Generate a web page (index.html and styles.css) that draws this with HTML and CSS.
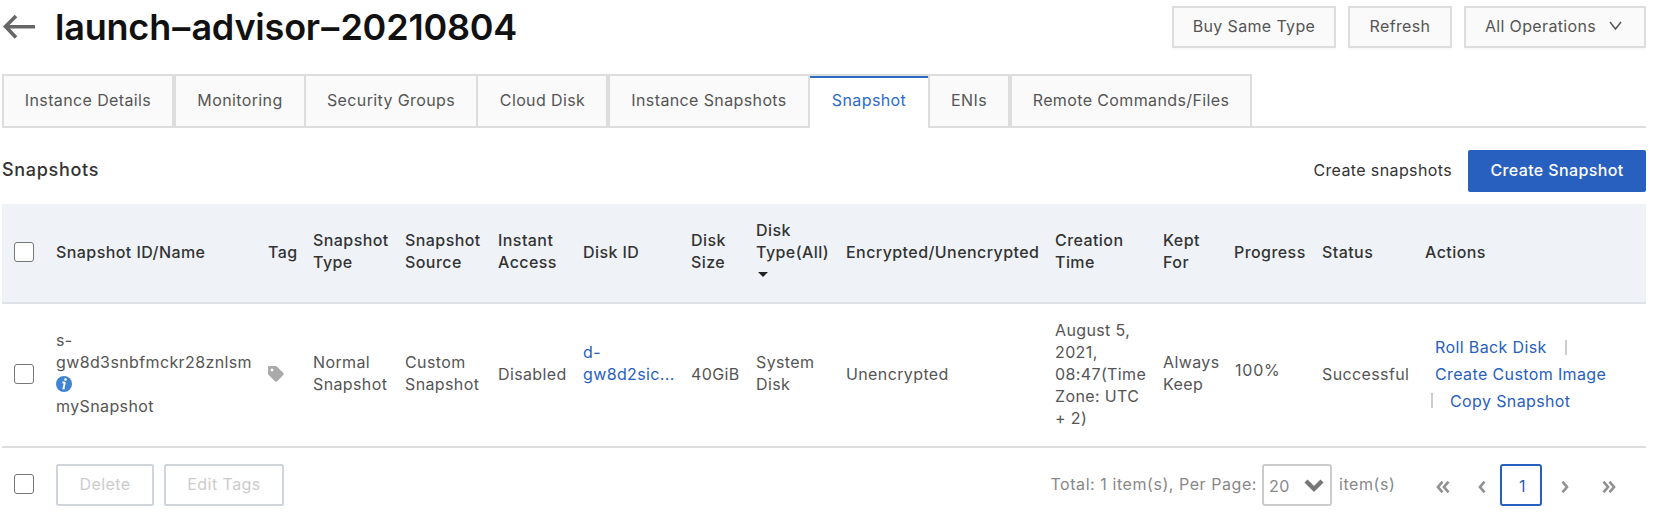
FILE: index.html
```html
<!DOCTYPE html>
<html lang="en">
<head>
<meta charset="utf-8">
<title>launch-advisor-20210804</title>
<link rel="stylesheet" href="styles.css">
</head>
<body>
<header class="header">
  <svg class="back" width="34" height="26" viewBox="0 0 34 26"><path d="M14 2 3.500 12.500 14 23.500M3.500 12.800h29.500" fill="none" stroke="#666" stroke-width="3.600"/></svg>
  <h1 class="title">launch<span class="dash">–</span>advisor<span class="dash">–</span>20210804</h1>
  <div class="header-actions">
    <button class="btn buy">Buy Same Type</button>
    <button class="btn refresh">Refresh</button>
    <button class="btn operations">All Operations<svg width="14" height="10" viewBox="0 0 14 10"><path d="M1 1l5.500 7L12 1" fill="none" stroke="#555" stroke-width="1.400"/></svg></button>
  </div>
</header>
<nav class="tabs">
  <a class="tab t-details">Instance Details</a>
  <a class="tab t-monitoring">Monitoring</a>
  <a class="tab t-security joined">Security Groups</a>
  <a class="tab t-disk joined">Cloud Disk</a>
  <a class="tab t-snapshots">Instance Snapshots</a>
  <a class="tab t-snapshot active">Snapshot</a>
  <a class="tab t-enis">ENIs</a>
  <a class="tab t-remote">Remote Commands/Files</a>
  <span class="tabs-rest"></span>
</nav>
<section class="toolbar">
  <h2 class="subtitle">Snapshots</h2>
  <span class="hint">Create snapshots</span>
  <button class="primary">Create Snapshot</button>
</section>
<table class="grid">
  <colgroup><col class="c1"><col class="c2"><col class="c3"><col class="c4"><col class="c5"><col class="c6"><col class="c7"><col class="c8"><col class="c9"><col class="c10"><col class="c11"><col class="c12"><col class="c13"><col class="c14"><col class="c15"></colgroup>
  <thead>
    <tr>
      <th><span class="check"></span></th>
      <th>Snapshot ID/Name</th>
      <th>Tag</th>
      <th class="even">Snapshot<br>Type</th>
      <th class="even">Snapshot<br>Source</th>
      <th class="even">Instant<br>Access</th>
      <th>Disk ID</th>
      <th class="even">Disk<br>Size</th>
      <th>Disk<br>Type(All)<br><span class="caret"></span></th>
      <th>Encrypted/Unencrypted</th>
      <th class="even">Creation<br>Time</th>
      <th class="even">Kept<br>For</th>
      <th>Progress</th>
      <th>Status</th>
      <th>Actions</th>
    </tr>
  </thead>
  <tbody>
    <tr>
      <td><span class="check"></span></td>
      <td class="even">s-<br>gw8d3snbfmckr28znlsm<br><svg class="info" width="16" height="16" viewBox="0 0 16 16"><circle cx="8" cy="8" r="8" fill="#4083d3"/><path d="M9 6 7.500 12.200M6.400 6.500h2.200M6.500 12.300h2.200" stroke="#fff" stroke-width="1.800" fill="none"/><circle cx="9.500" cy="3.500" r="1.300" fill="#fff"/></svg><br>mySnapshot</td>
      <td><svg class="tag" width="16" height="16" viewBox="0 0 16 16"><path fill="#aaa" fill-rule="evenodd" d="M1 0h7.300l7 7.100q.7.900 0 1.800L9 15.400q-.9.700-1.800 0L0 8.200V1q0-1 1-1zM4 2.600a1.400 1.400 0 1 0 .01 0z"/></svg></td>
      <td class="even">Normal<br>Snapshot</td>
      <td class="even">Custom<br>Snapshot</td>
      <td>Disabled</td>
      <td class="disk-id"><a class="link">d-<br>gw8d2sic...</a></td>
      <td>40GiB</td>
      <td class="even">System<br>Disk</td>
      <td>Unencrypted</td>
      <td>August 5,<br>2021,<br>08:47(Time<br>Zone: UTC<br>+ 2)</td>
      <td class="even">Always<br>Keep</td>
      <td class="progress">100%</td>
      <td>Successful</td>
      <td class="actions">
        <div class="action-row first"><a class="link">Roll Back Disk</a><i class="bar"></i></div>
        <div class="action-row second"><a class="link">Create Custom Image</a></div>
        <div class="action-row third"><i class="bar"></i><a class="link">Copy Snapshot</a></div>
      </td>
    </tr>
  </tbody>
</table>
<footer class="footer">
  <span class="check"></span>
  <button class="ghost delete">Delete</button>
  <button class="ghost edit">Edit Tags</button>
  <span class="total">Total: 1 item(s), Per Page:</span>
  <span class="select">20<svg width="20" height="14" viewBox="0 0 20 14"><path d="M2 2l8 8 8-8" fill="none" stroke="#777" stroke-width="4.400"/></svg></span>
  <span class="items">item(s)</span>
  <svg class="first-page" width="14" height="12" viewBox="0 0 14 12"><path d="M6.500 .7 2 6 6.500 11.300M12.500 .7 8 6l4.500 5.300" fill="none" stroke="#929292" stroke-width="2.700"/></svg>
  <svg class="prev-page" width="8" height="12" viewBox="0 0 8 12"><path d="M6.500 .7 2 6 6.500 11.300" fill="none" stroke="#929292" stroke-width="2.700"/></svg>
  <span class="page">1</span>
  <svg class="next-page" width="8" height="12" viewBox="0 0 8 12"><path d="M1.500 .7 6 6 1.500 11.300" fill="none" stroke="#929292" stroke-width="2.700"/></svg>
  <svg class="last-page" width="14" height="12" viewBox="0 0 14 12"><path d="M1.500 .7 6 6 1.500 11.300M7.500 .7 12 6 7.500 11.300" fill="none" stroke="#929292" stroke-width="2.700"/></svg>
</footer>
</body>
</html>
```

FILE: styles.css
```css
* { box-sizing: border-box; }
body {
  margin: 0;
  padding: 0 16px 0 2px;
  height: 520px;
  overflow: hidden;
  background: #fff;
  color: #555;
  font: 16px/22px Inter, "Liberation Sans", sans-serif;
  letter-spacing: 0.38px;
}
h1, h2 { margin: 0; }
svg { display: block; flex: none; }
button { font: inherit; letter-spacing: inherit; padding: 0; white-space: nowrap; flex: none; }
.header { display: flex; height: 54px; align-items: center; }
.title {
  margin-left: 19px;
  color: #111;
  font-size: 36px;
  line-height: 50px;
  font-weight: 600;
  letter-spacing: -0.2px;
  white-space: nowrap;
}
.dash { margin: 0 1.3px; }
.header-actions { display: flex; gap: 12px; margin-left: auto; letter-spacing: 0.35px; }
.btn {
  display: flex;
  align-items: center;
  justify-content: center;
  height: 42px;
  padding-bottom: 2px;
  border: 2px solid #ddd;
  background: #fafafa;
  color: #555;
  box-shadow: 0 2px 1px rgba(0, 0, 0, 0.02);
}
.buy { width: 164px; }
.refresh { width: 104px; }
.operations { width: 182px; gap: 13px; padding-right: 2px; }
.tabs { display: flex; height: 54px; margin-top: 20px; }
.tab {
  flex: none;
  border: 2px solid #ddd;
  background: #fafafa;
  line-height: 48px;
  text-align: center;
  white-space: nowrap;
}
.joined { border-left: 0; }
.active {
  border-width: 2px 0 0;
  background: #fff;
  color: #2b6ad0;
  box-shadow: inset 0 2px #2e6cc6;
}
.t-details { width: 172px; }
.t-monitoring { width: 132px; }
.t-security { width: 172px; }
.t-disk { width: 130px; padding-left: 1px; }
.t-snapshots { width: 202px; }
.t-snapshot { width: 118px; }
.t-enis { width: 82px; }
.t-remote { width: 242px; }
.tabs-rest { flex: 1; border-bottom: 2px solid #ddd; }
.toolbar { display: flex; align-items: center; height: 42px; margin: 22px 0 12px; color: #333; }
.subtitle { font-size: 18px; font-weight: 500; letter-spacing: 0.7px; padding-bottom: 2px; }
.hint { margin-left: auto; margin-right: 16px; padding-bottom: 2px; }
.primary {
  width: 178px;
  height: 42px;
  padding-bottom: 2px;
  border: 0;
  border-radius: 2px;
  background: #2860c0;
  color: #fff;
  font-weight: 500;
}
.grid { width: 1644px; table-layout: fixed; border-collapse: separate; border-spacing: 0; }
.c1 { width: 54px; } .c2 { width: 212px; } .c3 { width: 45px; } .c4 { width: 92px; } .c5 { width: 93px; }
.c6 { width: 85px; } .c7 { width: 108px; } .c8 { width: 65px; } .c9 { width: 90px; } .c10 { width: 209px; }
.c11 { width: 108px; } .c12 { width: 71px; } .c13 { width: 88px; } .c14 { width: 103px; } .c15 { width: 221px; }
th, td { padding: 0 0 2px; text-align: left; vertical-align: middle; white-space: nowrap; }
th { height: 100px; background: #eff3f8; border-bottom: 2px solid #dee3e9; color: #333; font-weight: 500; letter-spacing: 0.43px; }
td { height: 144px; border-bottom: 2px solid #ddd; }
.even { padding-bottom: 4px; }
.disk-id { padding-bottom: 24px; }
.check {
  display: block;
  flex: none;
  width: 20px;
  height: 20px;
  margin-left: 12px;
  border: 1.5px solid #767676;
  border-radius: 3px;
  background: #fff;
}
.caret {
  display: inline-block;
  margin: 0 0 2px 2px;
  vertical-align: middle;
  border: 5px solid transparent;
  border-top-color: #222;
  border-bottom: 0;
}
.info { margin: 3px 0; display: inline-block; vertical-align: top; }
.link { color: #2860c0; }
.progress { padding-bottom: 11px; padding-left: 1px; letter-spacing: 0.8px; }
.actions { padding-bottom: 3px; }
.action-row { display: flex; align-items: center; margin-left: 10px; }
.first { height: 26px; gap: 18px; }
.second { height: 28px; }
.third { height: 25px; margin-left: 6px; gap: 17px; }
.bar { width: 2px; height: 15px; background: #ccc; }
.footer { display: flex; align-items: center; height: 42px; margin-top: 16px; color: #888; white-space: nowrap; }
.footer > .check { margin-bottom: 2px; }
.ghost { height: 42px; padding-bottom: 2px; border: 2px solid #cfd5da; border-radius: 2px; background: #fff; color: #ccc; }
.delete { width: 98px; margin-left: 22px; }
.edit { width: 120px; margin-left: 10px; letter-spacing: 0.45px; }
.total { margin-left: auto; margin-right: 5px; padding-bottom: 2px; letter-spacing: 0.56px; }
.select {
  display: flex;
  align-items: center;
  justify-content: space-between;
  width: 70px;
  height: 42px;
  padding: 1px 6px 0 5px;
  border: 2px solid #ccc;
  border-radius: 3px;
}
.items { width: 97px; margin-left: 7px; padding-bottom: 2px; letter-spacing: 0.56px; }
.first-page { margin-top: 3px; }
.prev-page { margin: 3px 14px 0 28px; }
.page {
  width: 42px;
  height: 42px;
  border: 2px solid #2860c0;
  border-radius: 3px;
  padding-left: 3px;
  color: #2860c0;
  line-height: 40px;
  text-align: center;
}
.next-page { margin: 3px 33px 0 19px; }
.last-page { margin: 3px 30px 0 0; }
```
